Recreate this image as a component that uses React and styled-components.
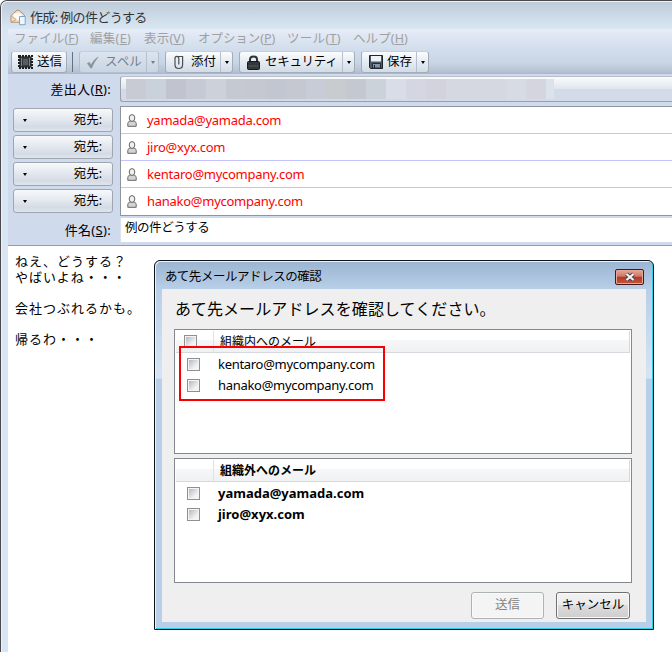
import React from "react";
import styled, { createGlobalStyle } from "styled-components";

const Global = createGlobalStyle`
  * { box-sizing: border-box; }
  body { margin: 0; background: #fff; overflow: hidden; }
`;

const Label = styled.span`
  display: block;
  font-size: ${(p) => p.$size || 12}px;
  letter-spacing: ${(p) => p.$ls || 0}px;
  font-weight: ${(p) => (p.$bold ? 700 : 400)};
  white-space: pre;
  u { text-underline-offset: 1px; text-decoration-thickness: 1px; }
`;

const Window = styled.div`
  position: relative;
  width: 672px;
  height: 652px;
  overflow: hidden;
  padding-left: 6px;
  border-top: 1px solid #4c484c;
  border-left: 1px solid #4c484c;
  border-top-left-radius: 7px;
  box-shadow: inset 1px 1px 0 #eef3f8;
  background: #d8e5f2;
  font-family: "Noto Sans", "Noto Sans CJK JP", sans-serif;
  color: #000;
  line-height: 1;
`;

const TitleBar = styled.header`
  height: 28px;
  margin: 0 0 0 -6px;
  padding: 4px 0 0 8px;
  display: flex;
  align-items: center;
  gap: 3px;
  border-top: 1px solid #eef3f8;
  border-left: 1px solid #eef3f8;
  border-top-left-radius: 6px;
  background: linear-gradient(#becbd9, #d8e6f2 95%);
  color: #333;
`;

const Chrome = styled.div`
  margin-left: 1px;
  height: 45px;
  background: linear-gradient(#e7ecf7, #cfdceb 50%, #c8d5e5 75%, #b6c2d2 95%, #a9b6c7);
`;

const MenuBar = styled.nav`
  height: 21px;
  display: flex;
  align-items: center;
  padding-left: 6px;
  color: #a0a0a0;
`;

const MenuItem = styled.div`
  width: ${(p) => p.$w}px;
`;

const ToolBar = styled.div`
  height: 24px;
  display: flex;
  align-items: center;
  padding-left: 3px;
`;

const ToolButton = styled.div`
  width: ${(p) => p.$w}px;
  height: 22px;
  margin-right: ${(p) => p.$gap}px;
  display: flex;
  border: 1px solid ${(p) => (p.$off ? "#b3bfce" : "#a2adba")};
  border-top-color: #c4cfdb;
  border-radius: 3px;
  background: ${(p) => (p.$off ? "linear-gradient(#dbe4ef, #cad5e3)" : "linear-gradient(#fbfcfd, #e3eaf2 55%, #d2dbe6)")};
  color: ${(p) => (p.$off ? "#777f89" : "#000")};
`;

const ToolFace = styled.div`
  flex: 1;
  display: flex;
  align-items: center;
  padding-left: ${(p) => p.$pad}px;
  gap: ${(p) => p.$between}px;
`;

const ToolArrow = styled.div`
  width: 12px;
  display: flex;
  align-items: center;
  justify-content: center;
  border-left: 1px solid #b6c0cc;
`;

const Caret = styled.i`
  border: 2.5px solid transparent;
  border-top: 3px solid currentColor;
  border-bottom: 0;
`;

const Divider = styled.div`
  width: 1px;
  height: 20px;
  margin-right: 6px;
  background: #657181;
`;

const Headers = styled.section`
  height: 172px;
  margin-left: 1px;
  padding: 2px 0 0 5px;
  display: grid;
  grid-template-columns: 100px 1fr;
  grid-template-rows: 30px 110px 28px;
  column-gap: 7px;
  background: #cfdaec;
  border-bottom: 1px solid #999da3;
`;

const FieldName = styled.div`
  height: ${(p) => p.$h || 26}px;
  padding-right: 2px;
  display: flex;
  align-items: center;
  justify-content: flex-end;
`;

const FromField = styled.div`
  height: 26px;
  padding: 2px 0 0 5px;
  display: flex;
  border: solid #9b9fa6;
  border-width: 1px 0 1px 1px;
  border-top-color: #b9bfca;
  border-radius: 3px 0 0 3px;
  background: linear-gradient(#fafbfc, #dfe6ee 50%, #d4dbe8 50%, #d3dae8);
`;

const Mosaic = styled.div`
  width: ${(p) => p.$w}px;
  height: 20px;
  background: ${(p) => p.$c};
`;

const Kinds = styled.div`
  display: flex;
  flex-direction: column;
  gap: 3px;
  padding-top: 2px;
`;

const KindButton = styled.div`
  height: 24px;
  padding: 0 10px 0 9px;
  display: flex;
  align-items: center;
  justify-content: space-between;
  border: 1px solid #a0a6af;
  border-radius: 3px;
  background: linear-gradient(#f7f9fb, #e2e7ee 50%, #d5dbe5 80%, #dfe5ed);
`;

const Addresses = styled.div`
  height: 110px;
  border: solid #8f959d;
  border-width: 1px 0 1px 1px;
  background: #fff;
`;

const Address = styled.div`
  height: 27px;
  padding-left: 6px;
  display: flex;
  align-items: center;
  gap: 10px;
  color: #ff0000;
  border-bottom: 1px solid #c4c4fb;
  &:last-child { border-bottom-color: transparent; }
`;

const Subject = styled.div`
  height: 24px;
  margin-top: 2px;
  padding: 0 0 3px 4px;
  display: flex;
  align-items: center;
  border-left: 1px solid #dde2ea;
  background: #fff;
`;

const Message = styled.main`
  height: 410px;
  margin-left: 1px;
  padding: 7px 7px;
  background: #fff;
  font-family: "Noto Sans CJK JP", sans-serif;
  line-height: 15.6px;
`;

const Dialog = styled.section`
  position: absolute;
  left: 153px;
  top: 259px;
  width: 500px;
  height: 370px;
  padding: 0 7px 7px 7px;
  border: 1px solid #0c1218;
  border-radius: 6px 6px 0 0;
  box-shadow: inset 1px 1px 0 #e8f2fb, inset -1px -1px 0 #2dcfe8;
  background: linear-gradient(#9bb4d1, #b8cfe9 28px, #d6e5f5 117px, #b8cfe9 118px);
`;

const DialogTitle = styled.header`
  height: 28px;
  padding: 5px 0 0 3px;
  display: flex;
  align-items: center;
  justify-content: space-between;
`;

const Close = styled.div`
  width: 29px;
  height: 16px;
  margin: -1px 2px 0 0;
  display: flex;
  align-items: center;
  justify-content: center;
  border: 1px solid #49161b;
  border-radius: 2px;
  box-shadow: inset 0 0 0 1px #e9a496;
  background: linear-gradient(#e5a798, #d0796a 45%, #b23a22 50%, #c4573c);
`;

const DialogBody = styled.div`
  height: 333px;
  padding: 0 14px 0 12px;
  background: #efefef;
`;

const Prompt = styled.div`
  height: 40px;
  padding-left: 1px;
  display: flex;
  align-items: center;
`;

const List = styled.div`
  height: 125px;
  margin-bottom: 4px;
  padding: 1px;
  border: 1px solid #828790;
  background: #fff;
`;

const ListHead = styled.div`
  height: 22px;
  margin-bottom: 1px;
  display: grid;
  grid-template-columns: 37px 1fr;
  border: solid #d5d8dc;
  border-width: 0 1px 1px 0;
  background: linear-gradient(#fff 40%, #f6f7f9 42%, #eff1f3);
`;

const HeadCell = styled.div`
  padding-left: ${(p) => p.$pad}px;
  display: flex;
  align-items: center;
  & + & { border-left: 1px solid #dfe2e5; }
`;

const ListRow = styled.div`
  height: 21px;
  padding-left: 11px;
  display: flex;
  align-items: center;
  gap: 18px;
`;

const Check = styled.i`
  width: 13px;
  height: 13px;
  padding: 1px;
  border: 1px solid #8e8f8f;
  background: linear-gradient(135deg, #b4b9c2, #f3f3f5 75%) content-box, #f4f4f4;
`;

const Actions = styled.div`
  height: 36px;
  padding: 9px 2px 0 0;
  margin-top: -4px;
  display: flex;
  justify-content: flex-end;
  gap: 12px;
`;

const ActionButton = styled.div`
  width: ${(p) => (p.$off ? 73 : 74)}px;
  height: 27px;
  display: flex;
  align-items: center;
  justify-content: center;
  border: 1px solid ${(p) => (p.$off ? "#adb2b5" : "#707070")};
  border-radius: 3px;
  box-shadow: inset 0 0 0 1px #fafafa;
  color: ${(p) => (p.$off ? "#838383" : "#000")};
  background: ${(p) => (p.$off ? "#f4f4f4" : "linear-gradient(#f2f2f2, #ebebeb 50%, #dcdcdc 50%, #cecece)")};
`;

const Highlight = styled.div`
  position: absolute;
  left: 178px;
  top: 345px;
  width: 206px;
  height: 55px;
  border: 2px solid #f80000;
`;

const MailIcon = () => (
  <svg width="17" height="17" viewBox="0 0 17 17">
    <path d="M1 6.5 7 1.3h2l5.5 4.9v7H1z" fill="#f4e3ce" stroke="#b48f70" />
    <path d="M3.5 4.5h8v4L7.6 11 3.5 8z" fill="#fffaf2" />
    <path d="m1.2 7 4.9 3.5L1.5 13M14 7l-4.5 3.5" fill="none" stroke="#c9a687" />
    <path d="M9.5 7.5h5.7v8.2H9.5z" fill="#eef6fd" stroke="#7fa3c6" />
  </svg>
);

const StampIcon = () => (
  <svg width="15" height="14" viewBox="0 0 15 14">
    <rect x="1" y="1" width="13" height="12" fill="#777d82" stroke="#1c1e20" strokeWidth="2" strokeDasharray="2 1" />
    <rect x="2.5" y="2.5" width="10" height="9" fill="#7c8287" stroke="#2c3033" />
    <rect x="4.5" y="3.5" width="6" height="7" fill="#565c61" stroke="#33383c" />
  </svg>
);

const CheckIcon = () => (
  <svg width="14" height="13" viewBox="0 0 14 13">
    <path d="M1 7.2 3.3 6 5 8.500C7 5 9.500 2 13 .6 10 4 7.500 8 6 12.300H4.500z" fill="#8b939d" />
  </svg>
);

const ClipIcon = () => (
  <svg width="10" height="15" viewBox="0 0 10 15" fill="none" stroke="#4a4e52" strokeWidth="1.2">
    <path d="M4.800 9.500V3.500c0-2.800-3.800-2.800-3.800 0v6c0 5.300 7.600 5.300 7.600 0V1.500H3.500" />
  </svg>
);

const LockIcon = () => (
  <svg width="13" height="15" viewBox="0 0 13 15">
    <path d="M3 7V4.500c0-4 7-4 7 0V7" fill="none" stroke="#303438" strokeWidth="2" />
    <rect x=".5" y="6.500" width="12" height="8" rx="1" fill="#33373b" stroke="#17191b" />
    <path d="M1.500 11h10" stroke="#565b60" />
  </svg>
);

const DiskIcon = () => (
  <svg width="14" height="14" viewBox="0 0 14 14">
    <path d="M.5.5h13v13h-12l-1-1z" fill="#4b5865" stroke="#20252a" />
    <path d="M2 1h10v5.500H2z" fill="#eef2f5" />
    <path d="M3.500 8.500h8V13h-8z" fill="#8095a8" stroke="#252c33" />
    <path d="M5.500 10v3" stroke="#1c232b" />
  </svg>
);

const PersonIcon = () => (
  <svg width="10" height="13" viewBox="0 0 10 13">
    <path d="M.8 12.300V9.500C.8 7.500 2.500 7.500 3.500 7h3c1 .5 2.700.5 2.700 2.500v2.800z" fill="#d4d4d2" stroke="#666" />
    <ellipse cx="5" cy="4" rx="2.800" ry="3.400" fill="#f0f0ee" stroke="#666" />
  </svg>
);

const CrossIcon = () => (
  <svg width="12" height="10" viewBox="0 0 12 10">
    <path d="m2.500 2 7 6m0-6-7 6" stroke="#4b4453" strokeWidth="4" />
    <path d="m2.500 2 7 6m0-6-7 6" stroke="#f5f5f7" strokeWidth="2.200" />
  </svg>
);

const menus = [
  ["ファイル", "F", 76, 0.1],
  ["編集", "E", 54, 0.3],
  ["表示", "V", 54, 0.2],
  ["オプション", "P", 89, -0.05],
  ["ツール", "T", 66, 0.3],
  ["ヘルプ", "H", 60, 0.1],
];

const tools = [
  { text: "スペル", icon: CheckIcon, w: 80, gap: 6, pad: 6, between: 5, off: true },
  { text: "添付", icon: ClipIcon, w: 68, gap: 6, pad: 8, between: 7 },
  { text: "セキュリティ", icon: LockIcon, w: 116, gap: 6, pad: 7, between: 5, ls: -0.3 },
  { text: "保存", icon: DiskIcon, w: 68, gap: 0, pad: 7, between: 4 },
];

const mosaic = [
  [20, "#c9cbd4"], [20, "#c9d1da"], [20, "#c1c4ce"], [20, "#c6cad4"], [20, "#ccd1da"],
  [20, "#c5c9d2"], [20, "#c6c8d1"], [20, "#c1c6d0"], [20, "#c5c8d1"], [20, "#c8ccd6"],
  [20, "#c8cccf"], [20, "#c4c8d1"], [20, "#cbd2da"], [20, "#d8dde7"], [20, "#d4d7e1"],
  [20, "#d2d3dd"], [60, "#d5d8e1"], [20, "#d7dbe4"], [20, "#d4d5df"], [8, "#dbe2ea"],
];

const recipients = ["yamada@yamada.com", "jiro@xyx.com", "kentaro@mycompany.com", "hanako@mycompany.com"];

const groups = [
  { name: "組織内へのメール", checkAll: true, mails: recipients.slice(2) },
  { name: "組織外へのメール", bold: true, mails: recipients.slice(0, 2) },
];

export default function App() {
  return (
    <>
      <Global />
      <Window>
        <TitleBar>
          <MailIcon />
          <Label $size={13} $ls={-0.65}>作成: 例の件どうする</Label>
        </TitleBar>
        <Chrome>
          <MenuBar>
            {menus.map(([name, key, w, ls]) => (
              <MenuItem key={key} $w={w}>
                <Label $size={12.5} $ls={ls}>{name}(<u>{key}</u>)</Label>
              </MenuItem>
            ))}
          </MenuBar>
          <ToolBar>
            <ToolButton $w={56} $gap={5}>
              <ToolFace $pad={6} $between={4}>
                <StampIcon />
                <Label $size={12.5}>送信</Label>
              </ToolFace>
            </ToolButton>
            <Divider />
            {tools.map(({ text, icon: Icon, w, gap, pad, between, off, ls }) => (
              <ToolButton key={text} $w={w} $gap={gap} $off={off}>
                <ToolFace $pad={pad} $between={between}>
                  <Icon />
                  <Label $size={12.5} $ls={ls}>{text}</Label>
                </ToolFace>
                <ToolArrow><Caret /></ToolArrow>
              </ToolButton>
            ))}
          </ToolBar>
        </Chrome>
        <Headers>
          <FieldName><Label $size={13} $ls={0.3}>差出人(<u>R</u>):</Label></FieldName>
          <FromField>
            {mosaic.map(([w, c], i) => <Mosaic key={i} $w={w} $c={c} />)}
          </FromField>
          <Kinds>
            {recipients.map((mail) => (
              <KindButton key={mail}>
                <Caret />
                <Label $size={12.5}>宛先:</Label>
              </KindButton>
            ))}
          </Kinds>
          <Addresses>
            {recipients.map((mail) => (
              <Address key={mail}>
                <PersonIcon />
                <Label $size={13} $ls={-0.27}>{mail}</Label>
              </Address>
            ))}
          </Addresses>
          <FieldName $h={29}><Label $size={13} $ls={0.3}>件名(<u>S</u>):</Label></FieldName>
          <Subject><Label $size={12.5} $ls={-0.45}>例の件どうする</Label></Subject>
        </Headers>
        <Message>
          <Label $size={13} $ls={1}>
            {"ねえ、どうする？\nやばいよね・・・\n\n会社つぶれるかも。\n\n帰るわ・・・"}
          </Label>
        </Message>
        <Dialog>
          <DialogTitle>
            <Label $size={12.5} $ls={-0.45}>あて先メールアドレスの確認</Label>
            <Close><CrossIcon /></Close>
          </DialogTitle>
          <DialogBody>
            <Prompt><Label $size={16} $ls={0.1}>あて先メールアドレスを確認してください。</Label></Prompt>
            {groups.map(({ name, bold, checkAll, mails }) => (
              <List key={name}>
                <ListHead>
                  <HeadCell $pad={8}>{checkAll && <Check />}</HeadCell>
                  <HeadCell $pad={6}><Label $bold={bold}>{name}</Label></HeadCell>
                </ListHead>
                {mails.map((mail) => (
                  <ListRow key={mail}>
                    <Check />
                    <Label $size={13} $ls={bold ? 0 : -0.3} $bold={bold}>{mail}</Label>
                  </ListRow>
                ))}
              </List>
            ))}
            <Actions>
              <ActionButton $off><Label $size={12.5}>送信</Label></ActionButton>
              <ActionButton><Label $size={12.5}>キャンセル</Label></ActionButton>
            </Actions>
          </DialogBody>
        </Dialog>
        <Highlight />
      </Window>
    </>
  );
}
